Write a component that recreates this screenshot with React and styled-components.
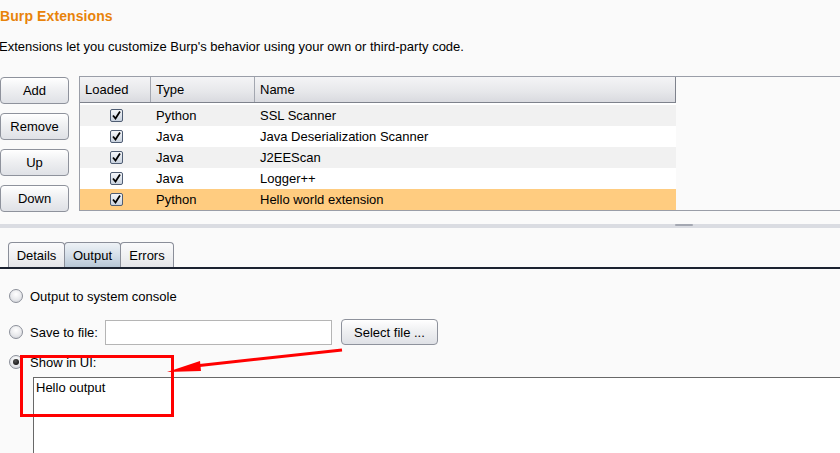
import React from "react";
import styled, { createGlobalStyle } from "styled-components";

const Global = createGlobalStyle`
  html, body { margin: 0; padding: 0; background: #fafafa; }
  body { font-family: "Liberation Sans", Arial, sans-serif; font-size: 13px; color: #000; }
`;

const Page = styled.div`
  position: relative;
  width: 840px;
  height: 453px;
  overflow: hidden;
  background: #fafafa;
`;

const Title = styled.h1`
  margin: 0;
  height: 32px;
  line-height: 32px;
  font-size: 14px;
  font-weight: bold;
  color: #e8830a;
  letter-spacing: 0.1px;
`;

const Desc = styled.p`
  margin: 0 0 0 -1px;
  height: 30px;
  line-height: 30px;
  font-size: 13px;
`;

const TopArea = styled.div`
  display: flex;
  gap: 10px;
  margin-top: 14px;
  height: 135px;
`;

const ButtonCol = styled.div`
  display: flex;
  flex-direction: column;
  gap: 9px;
  width: 69px;
  flex: none;
  padding-top: 1px;
`;

const Btn = styled.button`
  font-family: "Liberation Sans", Arial, sans-serif;
  font-size: 13px;
  color: #000;
  width: ${(p) => p.$w || 69}px;
  height: ${(p) => p.$h || 27}px;
  padding: 0;
  border: 1px solid #8e929c;
  border-radius: 4px;
  background: linear-gradient(#ffffff 0%, #eff0f2 45%, #dfe1e6 100%);
  box-shadow: inset 0 1px 0 #fff;
  flex: none;
`;

const TablePane = styled.div`
  flex: 1;
  border: 1px solid #9a9ea8;
  border-right: none;
  display: flex;
  flex-direction: column;
  background: #fafafa;
`;

const Table = styled.div`
  width: 596px;
  display: flex;
  flex-direction: column;
`;

const HeaderRow = styled.div`
  display: grid;
  grid-template-columns: 71px 104px 1fr;
  height: 25px;
  background: linear-gradient(#f4f4f6 0%, #e6e7ea 60%, #d9dadf 100%);
  border-bottom: 1px solid #7e828c;
  border-right: 1px solid #7e828c;
`;

const HeaderCell = styled.div`
  display: flex;
  align-items: center;
  padding-left: 5px;
  border-right: ${(p) => (p.$last ? "none" : "1px solid #a3a7b0")};
  font-size: 13px;
`;

const Spacer = styled.div`
  height: 2px;
  background: #fff;
`;

const Row = styled.div`
  display: grid;
  grid-template-columns: 71px 104px 1fr;
  height: 21px;
  align-items: center;
  background: ${(p) => (p.$sel ? "#ffcc80" : p.$odd ? "#f1f1f1" : "#ffffff")};
`;

const Cell = styled.div`
  padding-left: ${(p) => (p.$center ? 0 : 5)}px;
  display: flex;
  justify-content: ${(p) => (p.$center ? "center" : "flex-start")};
  align-items: center;
  font-size: 13px;
`;

const CheckBox = styled.span`
  width: 11px;
  height: 11px;
  border: 1px solid #4f5d73;
  border-radius: 2px;
  background: linear-gradient(#f4f6f9, #c9d2de);
  display: flex;
  align-items: center;
  justify-content: center;
  margin-left: 1px;
`;

const Divider = styled.div`
  margin-top: 13px;
  height: 4px;
  background: #dadce2;
  position: relative;
`;

const Knob = styled.span`
  position: absolute;
  left: 675px;
  top: 0;
  width: 18px;
  height: 2px;
  background: #a4a8b2;
  border-radius: 1px;
`;

const TabBar = styled.div`
  display: flex;
  padding-left: 8px;
  margin-top: 13px;
  border-bottom: 2px solid #1b2230;
  height: 26px;
  align-items: flex-end;
`;

const Tab = styled.div`
  height: 25px;
  width: ${(p) => p.$w}px;
  box-sizing: border-box;
  display: flex;
  align-items: center;
  justify-content: center;
  border: 1px solid #8a8e99;
  border-bottom: none;
  border-radius: 4px 4px 0 0;
  margin-right: -1px;
  font-size: 13px;
  background: ${(p) =>
    p.$active
      ? "linear-gradient(#eef2f6 0%, #d5dfe9 50%, #b7c7d6 100%)"
      : "linear-gradient(#fbfbfc 0%, #eeeff1 60%, #e3e4e8 100%)"};
`;

const OutputPanel = styled.div`
  display: flex;
  flex-direction: column;
  padding-left: 9px;
`;

const OptRow = styled.div`
  display: flex;
  align-items: center;
  height: ${(p) => p.$h}px;
  margin-top: ${(p) => p.$mt}px;
  gap: 7px;
`;

const Radio = styled.span`
  width: 12px;
  height: 12px;
  border-radius: 50%;
  border: 1px solid #8b8f99;
  background: radial-gradient(circle at 50% 35%, #ffffff 0%, #e8e9ec 55%, #c9ccd3 100%);
  display: flex;
  align-items: center;
  justify-content: center;
  flex: none;
`;

const Dot = styled.span`
  width: 6px;
  height: 6px;
  border-radius: 50%;
  background: radial-gradient(circle at 40% 35%, #555 0%, #111 80%);
`;

const Label = styled.span`
  font-size: 13px;
`;

const FileInput = styled.div`
  width: 225px;
  height: 23px;
  border: 1px solid #b5b5b5;
  background: #fff;
`;

const TextArea = styled.div`
  margin-left: 33px;
  margin-top: 5px;
  height: 120px;
  border-top: 1px solid #686868;
  border-left: 1px solid #686868;
  background: #fff;
  padding: 2px 0 0 2px;
  font-size: 13px;
`;

const Overlay = styled.svg`
  position: absolute;
  left: 0;
  top: 0;
  pointer-events: none;
`;

const rows = [
  { type: "Python", name: "SSL Scanner" },
  { type: "Java", name: "Java Deserialization Scanner" },
  { type: "Java", name: "J2EEScan" },
  { type: "Java", name: "Logger++" },
  { type: "Python", name: "Hello world extension", sel: true },
];

const Check = () => (
  <svg width="9" height="9" viewBox="0 0 9 9">
    <path d="M1 4.5 L3.5 7.5 L8 0.5" fill="none" stroke="#000" strokeWidth="1.8" />
  </svg>
);

export default function App() {
  return (
    <>
      <Global />
      <Page>
        <Title>Burp Extensions</Title>
        <Desc>Extensions let you customize Burp's behavior using your own or third-party code.</Desc>
        <TopArea>
          <ButtonCol>
            <Btn>Add</Btn>
            <Btn>Remove</Btn>
            <Btn>Up</Btn>
            <Btn>Down</Btn>
          </ButtonCol>
          <TablePane>
            <Table>
              <HeaderRow>
                <HeaderCell>Loaded</HeaderCell>
                <HeaderCell>Type</HeaderCell>
                <HeaderCell $last>Name</HeaderCell>
              </HeaderRow>
              <Spacer />
              {rows.map((r, i) => (
                <Row key={r.name} $odd={i % 2 === 0} $sel={r.sel}>
                  <Cell $center>
                    <CheckBox>
                      <Check />
                    </CheckBox>
                  </Cell>
                  <Cell>{r.type}</Cell>
                  <Cell>{r.name}</Cell>
                </Row>
              ))}
            </Table>
          </TablePane>
        </TopArea>
        <Divider>
          <Knob />
        </Divider>
        <TabBar>
          <Tab $w={57}>Details</Tab>
          <Tab $w={57} $active>Output</Tab>
          <Tab $w={54}>Errors</Tab>
        </TabBar>
        <OutputPanel>
          <OptRow $h={24} $mt={15}>
            <Radio />
            <Label>Output to system console</Label>
          </OptRow>
          <OptRow $h={26} $mt={11}>
            <Radio />
            <Label>Save to file:</Label>
            <FileInput />
            <Btn $w={97} $h={26} style={{ marginLeft: 2 }}>Select file ...</Btn>
          </OptRow>
          <OptRow $h={20} $mt={7}>
            <Radio>
              <Dot />
            </Radio>
            <Label>Show in UI:</Label>
          </OptRow>
        </OutputPanel>
        <TextArea>Hello output</TextArea>
        <Overlay width="840" height="453" viewBox="0 0 840 453">
          <rect x="21.5" y="356.5" width="151" height="59" fill="none" stroke="#ff0000" strokeWidth="3" />
          <line x1="342" y1="350" x2="195" y2="366" stroke="#ff0000" strokeWidth="3" />
          <polygon points="167,372 200,361 201,371" fill="#ff0000" />
        </Overlay>
      </Page>
    </>
  );
}
